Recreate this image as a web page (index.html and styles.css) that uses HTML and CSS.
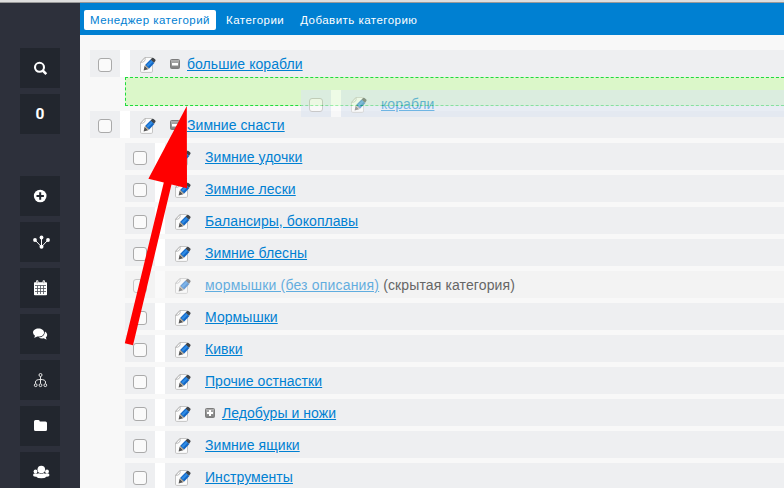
FILE: index.html
```
<!DOCTYPE html>
<html lang="ru">
<head>
<meta charset="utf-8">
<title>Менеджер категорий</title>
<link rel="stylesheet" href="styles.css">
</head>
<body>
<svg class="defs" aria-hidden="true">
  <defs>
    <linearGradient id="box-fill" x2="0" y2="1"><stop offset="0" stop-color="#b4b4b4"/><stop offset="1" stop-color="#7c7c7c"/></linearGradient>
    <symbol id="edit" viewBox="0 0 16 18">
      <path d="M5 1.500h6.500q1 0 1 1v12.700q0 1.200-1.200 1.200h-9.600q-1.200 0-1.200-1.200V6.200z" fill="#fcfcfc" stroke="#c4c4c4"/>
      <path d="M5 1.500q.6 2.500-.6 3.700-1.200 1.200-3.800 1.200z" fill="#fff" stroke="#aaa" stroke-width=".8"/>
      <path d="M3.600 14.500l1-4.800 3.600 3.500z" fill="#555"/>
      <path d="M4.600 9.700l1.200-1.200 3.600 3.500-1.200 1.200z" fill="#aaa08f"/>
      <path d="M5.300 8.800L10.500 3.400l3.900 3.700-5.200 5.400z" fill="#1266c4"/>
      <path d="M6.500 9.100L11.500 4.200l1.500 1.500-5 5z" fill="#2f8be4"/>
      <path d="M10.500 3.400l1.500-1.500q.8-.5 1.500 0l1.800 1.600q.7.800 0 1.600l-1.200 1.600z" fill="#404449"/>
    </symbol>
    <symbol id="minus" viewBox="0 0 10 10"><rect x=".5" y=".5" width="9" height="9" rx="1" fill="url(#box-fill)" stroke="#7c7c7c"/><path d="M2 4h6v2.500H2z" fill="#fff"/></symbol>
    <symbol id="plus" viewBox="0 0 10 10"><rect x=".5" y=".5" width="9" height="9" rx="1" fill="url(#box-fill)" stroke="#7c7c7c"/><path d="M4 2h2v2h2v2H6v2H4V6H2V4h2z" fill="#fff"/></symbol>
  </defs>
</svg>
<div class="window-edge"></div>
<div class="app">
  <aside class="sidebar">
    <a class="tool"><svg width="20" height="20" viewBox="0 0 20 20"><circle cx="9.500" cy="9.300" r="4.500" fill="none" stroke="#fff" stroke-width="2.100"/><path d="M12.700 12.500l3.600 3.600" stroke="#fff" stroke-width="2.500"/></svg></a>
    <a class="tool count">0</a>
    <span class="divider"></span>
    <a class="tool"><svg width="20" height="20" viewBox="0 0 20 20"><circle cx="10.200" cy="10" r="6.300" fill="#fff"/><path d="M10.200 6.300v7.400M6.500 10h7.400" stroke="#22262e" stroke-width="2"/></svg></a>
    <a class="tool"><svg width="20" height="20" viewBox="0 0 20 20"><path d="M11.500 14.800V5.500M11.500 14.800L5 8M11.500 14.800L18 8" fill="none" stroke="#fff"/><g fill="#fff"><circle cx="11.500" cy="5.500" r="1.900"/><circle cx="5" cy="8" r="1.900"/><circle cx="18" cy="8" r="1.900"/><circle cx="11.500" cy="14.700" r="2"/></g></svg></a>
    <a class="tool"><svg width="20" height="20" viewBox="0 0 20 20"><path d="M4 4.800q0-.8.800-.8h1.200v-1q0-1 1.200-1t1.200 1v1h4.200v-1q0-1 1.200-1t1.200 1v1h1.200q.8 0 .8.800v11.400q0 .8-.8.800H4.800q-.8 0-.8-.8z" transform="translate(0 .2)" fill="#fff"/><path d="M5 7.500h11M5 10.500h11M5 13.500h11M7.500 7.500V16M10.500 7.500V16M13.500 7.500V16" stroke="#4d5158" stroke-width=".8"/><path d="M7.200 3v2.300M13.800 3v2.300" stroke="#777" stroke-width=".8"/></svg></a>
    <a class="tool"><svg width="20" height="20" viewBox="0 0 20 20"><path d="M15 7.500q2.200 1.200 2.200 3.300 0 1.600-1.400 2.700.2 1 1 1.900-1.800 0-3-1.100-2.800.5-5-.8 5.800-.4 6.200-6z" fill="#fff"/><path d="M8.500 4.500c3.200 0 5.600 1.700 5.600 4s-2.400 4.100-5.600 4.100l-1.300-.1Q6 13.600 4 13.700q.8-.8 1-1.900Q3 10.600 3 8.500c0-2.300 2.300-4 5.500-4z" fill="#fff"/></svg></a>
    <a class="tool"><svg width="20" height="20" viewBox="0 0 20 20" fill="none" stroke="#e8e8e8"><circle cx="10.500" cy="5" r="1.500"/><path d="M10.500 6.500v7M5.500 13.500v-1.500q0-2.500 5-2.500t5 2.500v1.500"/><circle cx="5.700" cy="15.200" r="1.400"/><circle cx="10.500" cy="15.200" r="1.400"/><circle cx="15.300" cy="15.200" r="1.400"/></svg></a>
    <a class="tool"><svg width="20" height="20" viewBox="0 0 20 20"><path d="M4 5.500Q4 4 5.500 4h3q1.300 0 1.300 1.500h5.700q1.500 0 1.500 1.500v6.500q0 1.500-1.500 1.500h-10Q4 15 4 13.500z" fill="#fff"/></svg></a>
    <a class="tool"><svg width="20" height="20" viewBox="0 0 20 20" fill="#fff"><circle cx="5.500" cy="9.500" r="1.900"/><circle cx="17" cy="9.500" r="1.900"/><ellipse cx="5.500" cy="13" rx="2.500" ry="1.700"/><ellipse cx="17" cy="13" rx="2.500" ry="1.700"/><circle cx="11.300" cy="7.600" r="3.800"/><path d="M6.200 14.700q0-3.400 3-3.400 2 1.200 4.200 0 3 0 3 3.400-1.200 1.600-5.100 1.600t-5.100-1.600z"/></svg></a>
  </aside>
  <div class="content">
    <nav class="tabs">
      <a class="tab active">Менеджер категорий</a>
      <a class="tab">Категории</a>
      <a class="tab">Добавить категорию</a>
    </nav>
    <main class="tree">
      <div class="row">
        <div class="pick"><span class="checkbox"></span></div>
        <div class="body"><svg class="edit"><use href="#edit"/></svg><svg class="toggle"><use href="#minus"/></svg><a class="name">большие корабли</a></div>
      </div>
      <div class="drop"></div>
      <div class="row">
        <div class="pick"><span class="checkbox"></span></div>
        <div class="body"><svg class="edit"><use href="#edit"/></svg><svg class="toggle"><use href="#minus"/></svg><a class="name">Зимние снасти</a></div>
      </div>
      <div class="children">
        <div class="row"><div class="pick"><span class="checkbox"></span></div><div class="body"><svg class="edit"><use href="#edit"/></svg><a class="name">Зимние удочки</a></div></div>
        <div class="row"><div class="pick"><span class="checkbox"></span></div><div class="body"><svg class="edit"><use href="#edit"/></svg><a class="name">Зимние лески</a></div></div>
        <div class="row"><div class="pick"><span class="checkbox"></span></div><div class="body"><svg class="edit"><use href="#edit"/></svg><a class="name">Балансиры, бокоплавы</a></div></div>
        <div class="row"><div class="pick"><span class="checkbox"></span></div><div class="body"><svg class="edit"><use href="#edit"/></svg><a class="name">Зимние блесны</a></div></div>
        <div class="row hidden-category"><div class="pick"><span class="checkbox"></span></div><div class="body"><svg class="edit"><use href="#edit"/></svg><a class="name">мормышки (без описания)</a><span class="note">(скрытая категория)</span></div></div>
        <div class="row"><div class="pick"><span class="checkbox"></span></div><div class="body"><svg class="edit"><use href="#edit"/></svg><a class="name">Мормышки</a></div></div>
        <div class="row"><div class="pick"><span class="checkbox"></span></div><div class="body"><svg class="edit"><use href="#edit"/></svg><a class="name">Кивки</a></div></div>
        <div class="row"><div class="pick"><span class="checkbox"></span></div><div class="body"><svg class="edit"><use href="#edit"/></svg><a class="name">Прочие остнастки</a></div></div>
        <div class="row"><div class="pick"><span class="checkbox"></span></div><div class="body"><svg class="edit"><use href="#edit"/></svg><svg class="toggle"><use href="#plus"/></svg><a class="name">Ледобуры и ножи</a></div></div>
        <div class="row"><div class="pick"><span class="checkbox"></span></div><div class="body"><svg class="edit"><use href="#edit"/></svg><a class="name">Зимние ящики</a></div></div>
        <div class="row"><div class="pick"><span class="checkbox"></span></div><div class="body"><svg class="edit"><use href="#edit"/></svg><a class="name">Инструменты</a></div></div>
      </div>
    </main>
  </div>
</div>
<div class="row dragged"><div class="pick"><span class="checkbox"></span></div><div class="body"><svg class="edit"><use href="#edit"/></svg><a class="name">корабли</a></div></div>
<svg class="arrow" width="784" height="488" viewBox="0 0 784 488"><path d="M186.800 106L187 188.300 171.500 184.500 133 345.300 124.800 343.200 163.800 182.500 148.400 178.800z" fill="#f00"/></svg>
</body>
</html>
```
FILE: styles.css
```
* { box-sizing: border-box; }
body {
  margin: 0;
  width: 784px;
  height: 488px;
  overflow: hidden;
  position: relative;
  background: #f8f8f8;
  font: 14px/17px "Liberation Sans", Arial, sans-serif;
  color: #666;
}
.defs { position: absolute; width: 0; height: 0; }
.window-edge { height: 3px; background: #dedede; border-bottom: 1px solid #999; }
.app { display: flex; height: 485px; overflow: hidden; }
.sidebar {
  flex: none;
  width: 80px;
  padding: 45px 20px 0;
  display: flex;
  flex-direction: column;
  gap: 6px;
  background: #2d303b;
}
.tool {
  flex: none;
  height: 40px;
  display: flex;
  align-items: center;
  justify-content: center;
  background: #22262e;
  color: #fff;
}
.count { font: bold 15.5px/20px Roboto, sans-serif; }
.divider { flex: none; height: 30px; }
.content { flex: 1; min-width: 0; }
.tabs {
  display: flex;
  align-items: center;
  gap: 4px;
  height: 32px;
  padding: 2px 4px 0;
  background: #0080d2;
}
.tab {
  height: 20px;
  padding: 0 6px;
  border-radius: 2px;
  font-size: 11.5px;
  letter-spacing: .47px;
  line-height: 20px;
  color: #fff;
  white-space: nowrap;
}
.tab.active { background: #fff; color: #0080d2; }
.tree {
  display: flex;
  flex-direction: column;
  gap: 5px;
  padding: 15px 0 0 10px;
}
.row { display: flex; gap: 10px; height: 27px; flex: none; background: #fff; }
.pick { width: 30px; flex: none; padding: 8px 0 0 8px; background: #eeeff1; }
.checkbox {
  display: block;
  width: 14px;
  height: 14px;
  border: 1px solid #aaa;
  border-radius: 3px;
  background: #fafafa;
}
.body {
  flex: 1;
  display: flex;
  align-items: flex-start;
  padding: 6px 0 0 10px;
  background: #eeeff1;
  white-space: nowrap;
}
.edit { width: 16px; height: 18px; flex: none; margin-right: 14px; }
.toggle { width: 10px; height: 10px; flex: none; margin: 3px 7px 0 0; }
.name { color: #0080d2; text-decoration: underline; letter-spacing: .06px; }
.note { margin-left: 4px; letter-spacing: .12px; }
.drop {
  height: 29px;
  flex: none;
  margin: -5px -10px 0 35px;
  border: 1px dashed #1fdc3c;
  background: #dbf7c9;
}
.children { display: flex; flex-direction: column; gap: 5px; margin-left: 35px; }
.hidden-category { background: #fafafa; }
.hidden-category .pick, .hidden-category .body { background: #f3f3f3; }
.hidden-category .checkbox, .hidden-category .edit, .hidden-category .name { opacity: .6; }
.hidden-category .name { letter-spacing: .18px; }
.dragged { position: absolute; left: 301px; top: 90px; width: 493px; opacity: .55; }
.dragged .pick, .dragged .body { background: #dce5f2; }
.arrow { position: absolute; left: 0; top: 0; }
```
